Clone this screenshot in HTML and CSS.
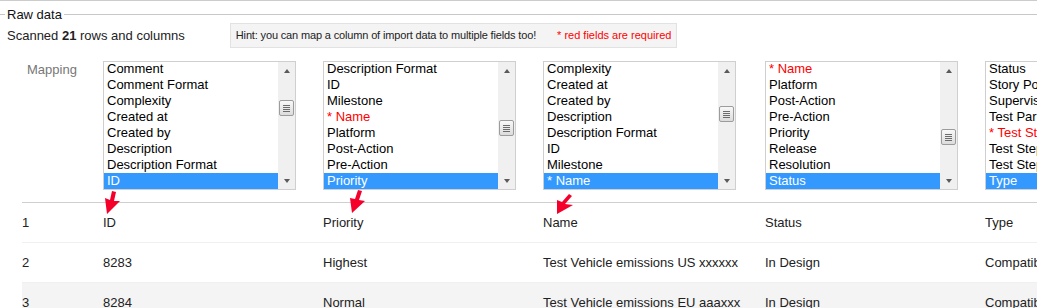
FILE: index.html
```html
<!DOCTYPE html>
<html>
<head>
<meta charset="utf-8">
<title>Raw data</title>
<link rel="stylesheet" href="styles.css">
</head>
<body>
<div class="page">
  <div class="section-title"><span>Raw data</span></div>
  <div class="info">
    <div class="scanned">Scanned <b>21</b> rows and columns</div>
    <div class="hint"><span class="hint-text">Hint: you can map a column of import data to multiple fields too!</span><span class="req">* red fields are required</span></div>
  </div>

  <div class="grid mapping">
    <div class="map-label">Mapping</div>

    <div class="listbox">
      <div class="options">
        <div class="opt">Comment</div>
        <div class="opt">Comment Format</div>
        <div class="opt">Complexity</div>
        <div class="opt">Created at</div>
        <div class="opt">Created by</div>
        <div class="opt">Description</div>
        <div class="opt">Description Format</div>
        <div class="opt sel">ID</div>
      </div>
      <div class="sbar"><div class="sbtn up"></div><div class="thumb t1"></div><div class="sbtn down"></div></div>
    </div>

    <div class="listbox">
      <div class="options">
        <div class="opt">Description Format</div>
        <div class="opt">ID</div>
        <div class="opt">Milestone</div>
        <div class="opt req-opt">* Name</div>
        <div class="opt">Platform</div>
        <div class="opt">Post-Action</div>
        <div class="opt">Pre-Action</div>
        <div class="opt sel">Priority</div>
      </div>
      <div class="sbar"><div class="sbtn up"></div><div class="thumb t2"></div><div class="sbtn down"></div></div>
    </div>

    <div class="listbox">
      <div class="options">
        <div class="opt">Complexity</div>
        <div class="opt">Created at</div>
        <div class="opt">Created by</div>
        <div class="opt">Description</div>
        <div class="opt">Description Format</div>
        <div class="opt">ID</div>
        <div class="opt">Milestone</div>
        <div class="opt sel">* Name</div>
      </div>
      <div class="sbar"><div class="sbtn up"></div><div class="thumb t3"></div><div class="sbtn down"></div></div>
    </div>

    <div class="listbox">
      <div class="options">
        <div class="opt req-opt">* Name</div>
        <div class="opt">Platform</div>
        <div class="opt">Post-Action</div>
        <div class="opt">Pre-Action</div>
        <div class="opt">Priority</div>
        <div class="opt">Release</div>
        <div class="opt">Resolution</div>
        <div class="opt sel">Status</div>
      </div>
      <div class="sbar"><div class="sbtn up"></div><div class="thumb t4"></div><div class="sbtn down"></div></div>
    </div>

    <div class="listbox">
      <div class="options">
        <div class="opt">Status</div>
        <div class="opt">Story Points</div>
        <div class="opt">Supervisor</div>
        <div class="opt">Test Parameters</div>
        <div class="opt req-opt">* Test Steps</div>
        <div class="opt">Test Step Expected</div>
        <div class="opt">Test Step Result</div>
        <div class="opt sel">Type</div>
      </div>
      <div class="sbar"><div class="sbtn up"></div><div class="thumb t5"></div><div class="sbtn down"></div></div>
    </div>
  </div>

  <div class="rows">
    <div class="grid row head">
      <div>1</div>
      <div class="cell">ID<svg class="arrow a1" width="22" height="26" viewBox="0 0 22 26"><polygon points="4,24 2,8 7,10 9,1 13,2 11,11 17,11"/></svg></div>
      <div class="cell">Priority<svg class="arrow a2" width="22" height="26" viewBox="0 0 22 26"><polygon points="4,24 2,9 7,10 10,1 14,2 11,11 17,12"/></svg></div>
      <div class="cell">Name<svg class="arrow a3" width="24" height="26" viewBox="0 0 24 26"><polygon points="4,23 4,9 9,11 16,3 19,5 12,13 20,14"/></svg></div>
      <div>Status</div>
      <div>Type</div>
    </div>
    <div class="grid row">
      <div>2</div>
      <div>8283</div>
      <div>Highest</div>
      <div>Test Vehicle emissions US xxxxxx</div>
      <div>In Design</div>
      <div>Compatibility</div>
    </div>
    <div class="grid row alt">
      <div>3</div>
      <div>8284</div>
      <div>Normal</div>
      <div>Test Vehicle emissions EU aaaxxx</div>
      <div>In Design</div>
      <div>Compatibility</div>
    </div>
  </div>
</div>
</body>
</html>
```

FILE: styles.css
```css
html, body {
  margin: 0;
  padding: 0;
  background: #fff;
}

body {
  font-family: "Liberation Sans", Arial, sans-serif;
  font-size: 13px;
  color: #222;
  overflow: hidden;
}

.page {
  border-top: 1px solid #cccccc;
  width: 100%;
}

/* fieldset-like title */
.section-title {
  display: flex;
  align-items: flex-start;
  height: 22px;
}

.section-title::before,
.section-title::after {
  content: "";
  height: 1px;
  background: #c8c8c8;
  margin-top: 13px;
}

.section-title::before {
  width: 5px;
}

.section-title::after {
  flex: 1;
}

.section-title span {
  padding: 6px 2px 0;
  line-height: 15px;
  color: #111;
}

/* info line */
.info {
  display: flex;
  align-items: center;
  height: 25px;
  padding-left: 7px;
  gap: 45px;
}

.scanned b {
  font-weight: bold;
}

.hint {
  display: flex;
  gap: 21px;
  font-size: 11px;
  line-height: 13px;
  padding: 5px 5px;
  background: #f4f4f4;
  border: 1px solid #e2e2e2;
  color: #222;
}

.hint-text {
  letter-spacing: -0.15px;
}

.hint .req {
  color: #ff0000;
}

/* grid shared between mapping and rows */
.grid {
  display: grid;
  grid-template-columns: 81px 220px 220px 222px 220px 220px;
}

.mapping {
  margin-top: 13px;
  padding-left: 22px;
  height: 141px;
}

.map-label {
  color: #777;
  padding: 1px 0 0 5px;
  line-height: 16px;
}

/* listbox */
.listbox {
  box-sizing: border-box;
  width: 193px;
  height: 129px;
  border: 1px solid #cfcfcf;
  display: flex;
  background: #fff;
}

.options {
  flex: 1;
  display: flex;
  flex-direction: column;
  justify-content: flex-end;
  overflow: hidden;
  min-width: 0;
}

.opt {
  flex: none;
  height: 16px;
  line-height: 16px;
  padding-left: 3px;
  white-space: nowrap;
  color: #000;
}

.opt.req-opt {
  color: #ff0000;
}

.opt.sel {
  background: #3399ff;
  color: #fff;
}

.sbar {
  flex: none;
  width: 17px;
  background: #f0f0f0;
  display: flex;
  flex-direction: column;
  align-items: center;
}

.sbtn {
  width: 17px;
  height: 17px;
  display: flex;
  align-items: center;
  justify-content: center;
  flex: none;
}

.sbtn.up::before {
  content: "";
  width: 0;
  height: 0;
  border-left: 3.5px solid transparent;
  border-right: 3.5px solid transparent;
  border-bottom: 4px solid #5a5a5a;
}

.sbtn.down {
  margin-top: auto;
}

.sbtn.down::before {
  content: "";
  width: 0;
  height: 0;
  border-left: 3.5px solid transparent;
  border-right: 3.5px solid transparent;
  border-top: 4px solid #5a5a5a;
}

.thumb {
  box-sizing: border-box;
  width: 15px;
  height: 16px;
  flex: none;
  border: 1px solid #9c9c9c;
  border-radius: 2px;
  background: linear-gradient(#f8f8f8, #dcdcdc);
  display: flex;
  align-items: center;
  justify-content: center;
}

.thumb::before {
  content: "";
  width: 7px;
  height: 7px;
  background: repeating-linear-gradient(#6b6b6b 0 1px, transparent 1px 2px);
}

.t1 { margin-top: 21px; }
.t2 { margin-top: 41px; }
.t3 { margin-top: 27px; }
.t4 { margin-top: 50px; }
.t5 { margin-top: 60px; }

/* data rows */
.rows {
  margin-left: 22px;
}

.row {
  box-sizing: border-box;
  height: 40px;
  align-items: center;
  border-bottom: 1px solid #f0f0f0;
  white-space: nowrap;
  color: #222;
}

.row.head {
  height: 41px;
  border-top: 1px solid #cfcfcf;
}

.row.alt {
  background: #f4f4f4;
}

.cell {
  position: relative;
}

.arrow {
  position: absolute;
  fill: #f5002a;
}

.a1 { left: 0; top: -25px; }
.a2 { left: 25px; top: -26px; }
.a3 { left: 10px; top: -24px; }
```
